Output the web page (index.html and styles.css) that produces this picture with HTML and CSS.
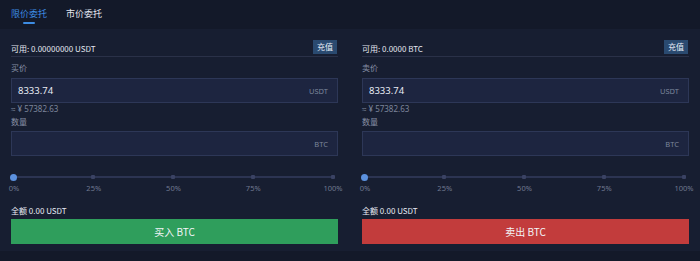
FILE: index.html
```html
<!DOCTYPE html>
<html lang="zh">
<head>
<meta charset="utf-8">
<link rel="stylesheet" href="styles.css">
</head>
<body>
<div class="tabs">
  <div class="tab active"><span>限价委托</span><i class="bar"></i></div>
  <div class="tab"><span>市价委托</span></div>
</div>
<div class="panel">
  <div class="col">
    <div class="avail"><span class="avail-text">可用: 0.00000000 USDT</span><button class="charge">充值</button></div>
    <div class="label">买价</div>
    <div class="input"><span class="val">8333.74</span><span class="unit">USDT</span></div>
    <div class="approx">≈ ¥ 57382.63</div>
    <div class="label label2">数量</div>
    <div class="input input2"><span class="val"></span><span class="unit">BTC</span></div>
    <div class="slider">
      <div class="track"><i class="dot"></i><i class="dot"></i><i class="dot"></i><i class="dot"></i><i class="dot"></i><i class="thumb"></i></div>
      <div class="marks"><span>0%</span><span>25%</span><span>50%</span><span>75%</span><span>100%</span></div>
    </div>
    <div class="total">全额 0.00 USDT</div>
    <button class="action buy">买入 BTC</button>
  </div>
  <div class="col">
    <div class="avail"><span class="avail-text">可用: 0.0000 BTC</span><button class="charge">充值</button></div>
    <div class="label">卖价</div>
    <div class="input"><span class="val">8333.74</span><span class="unit">USDT</span></div>
    <div class="approx">≈ ¥ 57382.63</div>
    <div class="label label2">数量</div>
    <div class="input input2"><span class="val"></span><span class="unit">BTC</span></div>
    <div class="slider">
      <div class="track"><i class="dot"></i><i class="dot"></i><i class="dot"></i><i class="dot"></i><i class="dot"></i><i class="thumb"></i></div>
      <div class="marks"><span>0%</span><span>25%</span><span>50%</span><span>75%</span><span>100%</span></div>
    </div>
    <div class="total">全额 0.00 USDT</div>
    <button class="action sell">卖出 BTC</button>
  </div>
</div>
</body>
</html>
```
FILE: styles.css
```css
* { box-sizing: border-box; }
html, body { margin: 0; padding: 0; }
body {
  width: 700px;
  height: 261px;
  overflow: hidden;
  background: #131929;
  font-family: "Noto Sans CJK SC", "Noto Sans", sans-serif;
  color: #d6dbe6;
}
.tabs {
  height: 29px;
  display: flex;
  gap: 19px;
  padding-left: 11px;
  padding-top: 7px;
}
.tab {
  display: flex;
  flex-direction: column;
  align-items: center;
  font-size: 9px;
  line-height: 14px;
  color: #e3e7f0;
}
.tab.active { color: #3d8ce3; }
.tab .bar {
  display: block;
  width: 12px;
  height: 2px;
  margin-top: 1px;
  background: #3d8ce3;
  border-radius: 1px;
}
.panel {
  background: #171e31;
  display: grid;
  grid-template-columns: 327px 327px;
  column-gap: 24px;
  padding: 11px 12px 6px 11px;
  height: 222px;
}
.col { display: flex; flex-direction: column; min-width: 0; }
.avail {
  display: flex;
  justify-content: space-between;
  min-height: 17px;
  border-bottom: 1px solid #2a3148;
}
.avail-text {
  align-self: flex-end;
  font-size: 8px;
  line-height: 14px;
  color: #e2e6ee;
}
.charge {
  align-self: flex-start;
  height: 14px;
  width: 24px;
  padding: 0;
  border: 0;
  background: #2a4a70;
  color: #e6ecf6;
  font-family: inherit;
  font-size: 8px;
  line-height: 14px;
  margin-right: 1px;
}
.label {
  margin-top: 5px;
  font-size: 8px;
  line-height: 12px;
  color: #8790a5;
}
.label2 { margin-top: 1px; }
.input {
  margin-top: 4px;
  height: 25px;
  border: 1px solid #2d3757;
  background: #1d2540;
  display: flex;
  align-items: center;
  justify-content: space-between;
  padding: 0 9px 0 6px;
}
.input2 { margin-top: 3px; }
.val { font-size: 9.5px; color: #e9edf5; font-family: "Noto Sans", sans-serif; }
.unit { font-size: 7.5px; color: #7c859b; font-family: "Noto Sans", sans-serif; }
.approx {
  font-size: 8px;
  line-height: 12px;
  color: #7c859b;
  font-family: "Noto Sans", sans-serif;
}
.slider {
  margin-top: 17px;
  padding: 0 5px 0 2px;
}
.track {
  position: relative;
  height: 8px;
  display: flex;
  justify-content: space-between;
  align-items: center;
  background: linear-gradient(#2c3452, #2c3452) center / 100% 2px no-repeat;
}
.dot {
  display: block;
  width: 4px;
  height: 4px;
  border-radius: 1px;
  background: #3a4263;
}
.dot:first-child { margin-left: -2px; }
.dot:nth-child(5) { margin-right: -2px; }
.thumb {
  position: absolute;
  left: -3.5px;
  top: 0.5px;
  width: 7px;
  height: 7px;
  border-radius: 50%;
  background: #5c91df;
}
.marks {
  margin-top: 2px;
  display: flex;
  justify-content: space-between;
  font-size: 7.5px;
  line-height: 10px;
  color: #6f7890;
  font-family: "Noto Sans", sans-serif;
}
.marks span {
  width: 0;
  display: flex;
  justify-content: center;
  white-space: nowrap;
}
.marks span:first-child { margin-left: 1px; }
.total {
  margin-top: 12px;
  font-size: 8px;
  line-height: 12px;
  color: #e8ecf4;
}
.action {
  margin-top: 2px;
  height: 25px;
  border: 0;
  padding: 0;
  color: #f2f4f8;
  font-family: inherit;
  font-size: 10px;
}
.buy { background: #2f9e5c; }
.sell { background: #c23c3c; }
```
